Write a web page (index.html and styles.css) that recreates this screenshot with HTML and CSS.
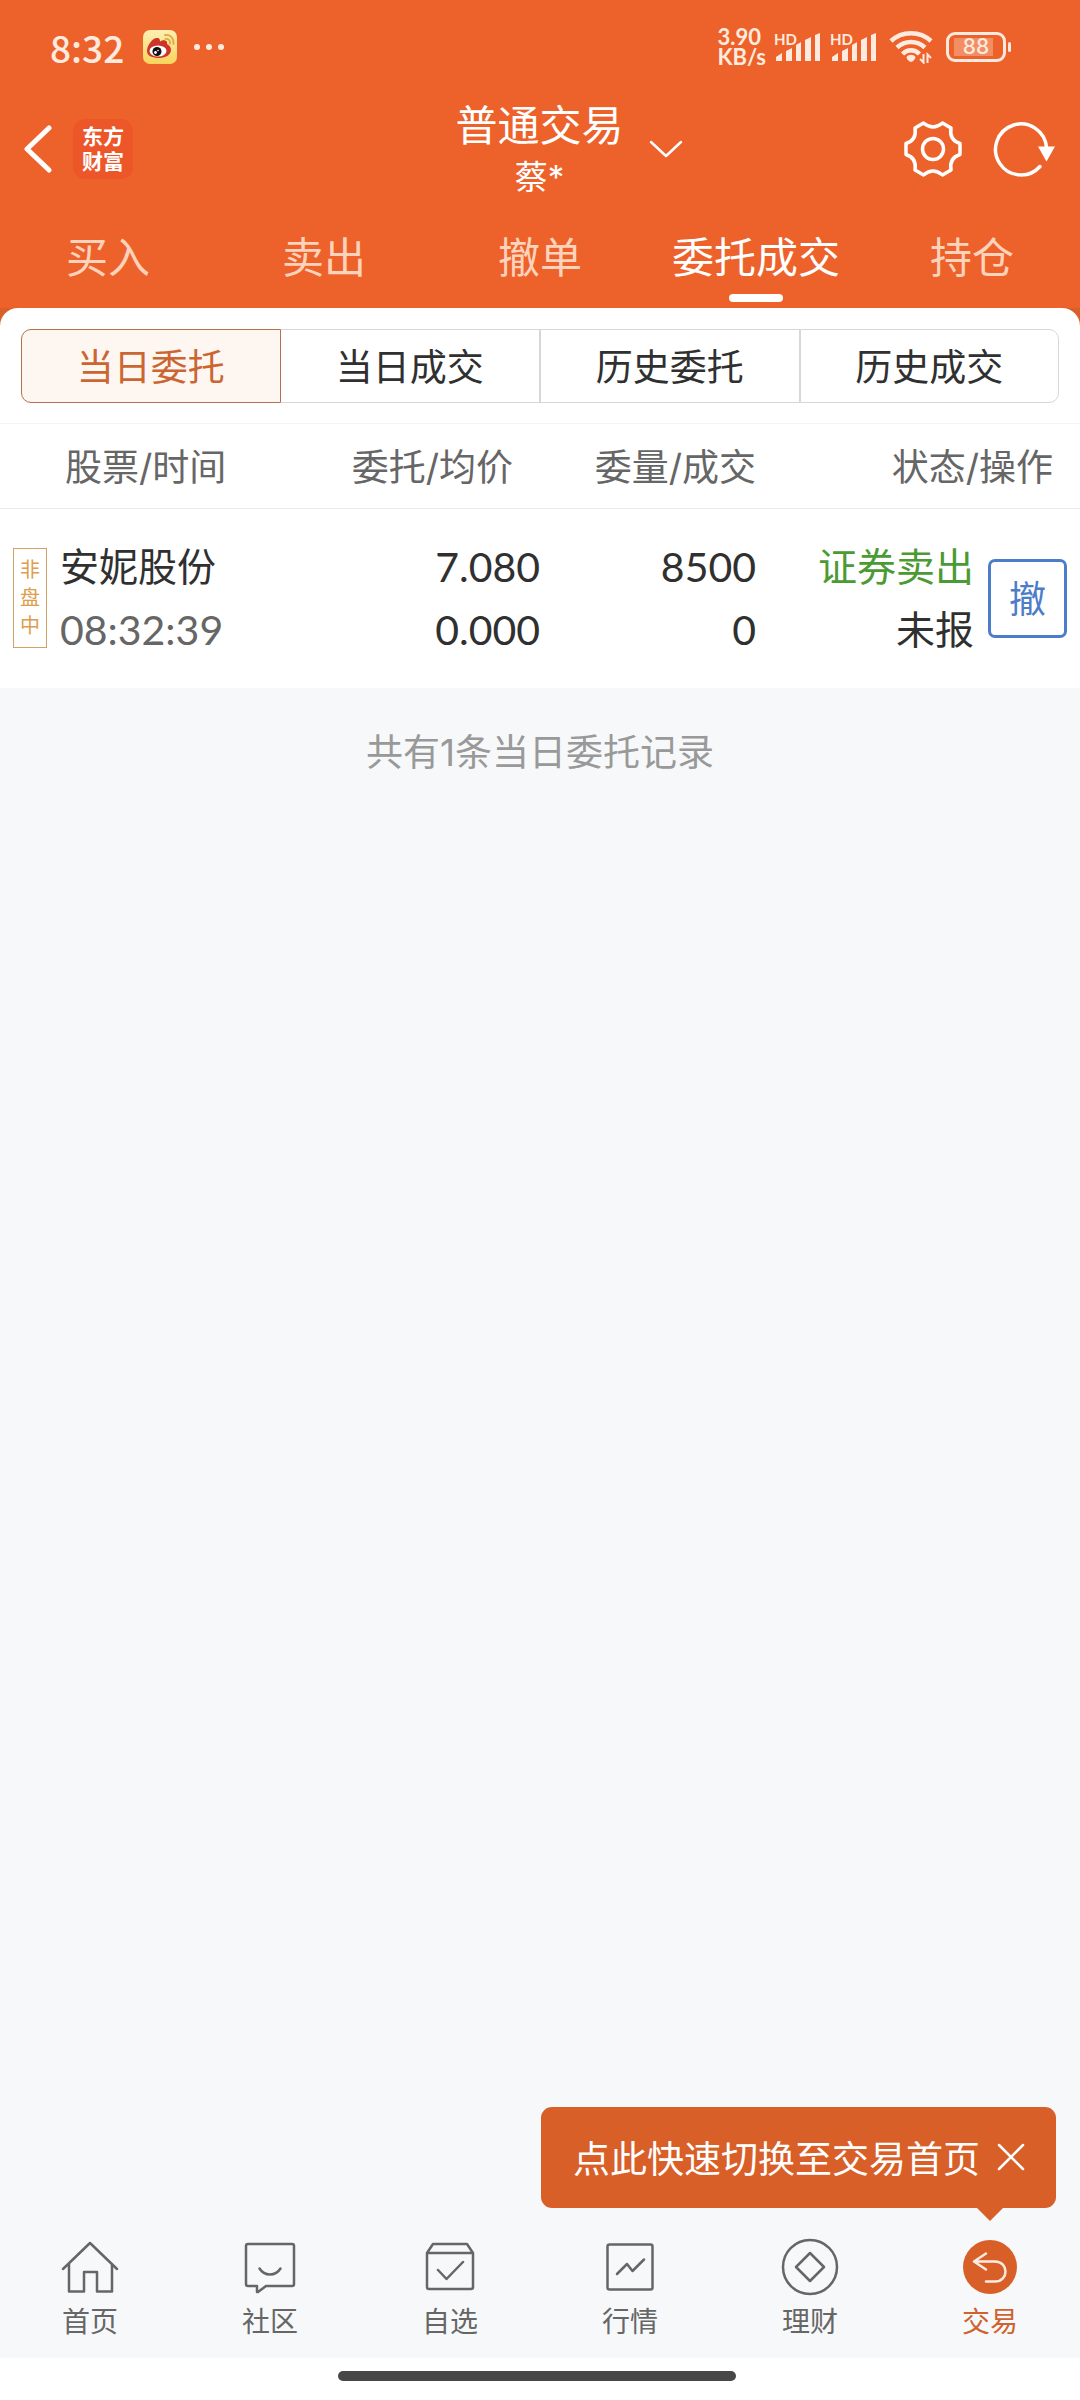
FILE: index.html
```html
<!DOCTYPE html>
<html lang="zh-CN">
<head>
<meta charset="utf-8">
<meta name="viewport" content="width=device-width, initial-scale=1">
<title>普通交易</title>
<link rel="stylesheet" href="styles.css">
</head>
<body>
<div class="app">
  <header class="top">
    <div class="status">
      <div class="status-left">
        <span class="clock">8:32</span>
        <svg class="weibo" width="34" height="34" viewBox="0 0 34 34" aria-hidden="true">
          <defs><linearGradient id="wb" x1="0" y1="0" x2="0" y2="1"><stop offset="0" stop-color="#fdf0b4"/><stop offset="1" stop-color="#f9d35c"/></linearGradient></defs>
          <rect width="34" height="34" rx="7" fill="url(#wb)"/>
          <path d="M4 21C4 16 9 8 14 8c3 0 3 2 3 3.500 3-2 8-2 7 2.500 2 1 4 3 4 6 0 5-6 8-12 8S4 26 4 21z" fill="#cf3329"/>
          <ellipse cx="15" cy="21" rx="8.500" ry="5.500" fill="#fff"/>
          <circle cx="14" cy="21.500" r="4.500" fill="#111"/>
          <circle cx="12.500" cy="22.500" r="1.400" fill="#fff"/><circle cx="15" cy="20.500" r=".8" fill="#fff"/>
          <path d="M22 5c5-1 9 3 8.500 9M22.500 9c3-.5 5 1.500 4.500 4.500" fill="none" stroke="#e3a944" stroke-width="1.800" stroke-linecap="round"/>
        </svg>
        <svg width="30" height="6" viewBox="0 0 30 6" fill="#ffeadf" aria-hidden="true"><circle cx="3" cy="3" r="3"/><circle cx="15" cy="3" r="3"/><circle cx="27" cy="3" r="3"/></svg>
      </div>
      <div class="status-right">
        <div class="speed"><span>3.90</span><span>KB/s</span></div>
        <div class="signal">
          <span>HD</span>
          <svg width="44" height="28" viewBox="0 0 44 28" fill="#ffeadf" aria-hidden="true"><path d="M0 28v-4l6-4v8zM10 28V18l6-3v13zM20 28V12l5-3v19zM29 28V7l6-3v24zM39 28V2l5-2v28z"/></svg>
        </div>
        <div class="signal">
          <span>HD</span>
          <svg width="44" height="28" viewBox="0 0 44 28" fill="#ffeadf" aria-hidden="true"><path d="M0 28v-4l6-4v8zM10 28V18l6-3v13zM20 28V12l5-3v19zM29 28V7l6-3v24zM39 28V2l5-2v28z"/></svg>
        </div>
        <svg class="wifi" width="44" height="34" viewBox="0 0 44 34" fill="none" stroke="#ffeadf" stroke-width="4.500" aria-hidden="true">
          <path d="M2 11c11-10.500 29-10.500 40 0M8 17.500c8-7.500 20-7.500 28 0M13.500 24c5-5 12-5 17 0"/>
          <path d="M17.500 27c2-3 7-3 9 0 0 2-3 5-4.500 5s-4.500-3-4.500-5z" fill="#ffeadf" stroke="none"/>
          <path d="M34.500 24v8.500L31 29M38.500 33v-8.500L42 28" stroke-width="2"/>
        </svg>
        <div class="battery"><span>88</span></div>
      </div>
    </div>

    <div class="titlebar">
      <div class="title-left">
        <button class="icon-btn" aria-label="返回">
          <svg width="30" height="52" viewBox="0 0 30 52" fill="none" stroke="#fff" stroke-width="5" stroke-linecap="round" stroke-linejoin="round"><path d="M25 5L3 26l22 21"/></svg>
        </button>
        <div class="logo"><span>东方</span><span>财富</span></div>
      </div>
      <div class="title">
        <h1>普通交易</h1>
        <p>蔡*</p>
      </div>
      <div class="title-right">
        <button class="icon-btn" aria-label="切换账户">
          <svg width="34" height="18" viewBox="0 0 34 18" fill="none" stroke="#fff" stroke-width="2.500" stroke-linecap="round" stroke-linejoin="round"><path d="M2 2l15 14L32 2"/></svg>
        </button>
        <div class="actions">
          <button class="icon-btn" aria-label="设置">
            <svg width="60" height="60" viewBox="0 0 60 60" fill="none" stroke="#fff" stroke-width="3.500" stroke-linejoin="round"><path d="M20.500 4Q30 12 39.500 4L48 9Q46 21 57 24.500V35.500Q46 39 48 51L39.500 56Q30 48 20.500 56L12 51Q14 39 3 35.500V24.500Q14 21 12 9Z"/><circle cx="30" cy="30" r="10.500"/></svg>
          </button>
          <button class="icon-btn" aria-label="刷新">
            <svg width="64" height="60" viewBox="0 0 64 60" fill="none" stroke="#fff" stroke-width="3.500" stroke-linecap="round"><path d="M55.500 29A25.500 25.500 0 1 0 49 47.500"/><path d="M47 27.500h17l-8.500 15z" fill="#fff" stroke="none"/></svg>
          </button>
        </div>
      </div>
    </div>

    <nav class="tabs">
      <a href="#buy">买入</a>
      <a href="#sell">卖出</a>
      <a href="#cancel">撤单</a>
      <a href="#orders" class="on" aria-current="page">委托成交</a>
      <a href="#positions">持仓</a>
    </nav>
  </header>

  <main class="main">
    <div class="card-back">
      <section class="card">
        <div class="segments">
          <button class="on">当日委托</button>
          <button>当日成交</button>
          <button>历史委托</button>
          <button>历史成交</button>
        </div>
        <table class="orders">
          <colgroup><col class="c-stock"><col class="c-price"><col class="c-qty"><col class="c-state"></colgroup>
          <thead>
            <tr><th class="h-stock">股票/时间</th><th class="h-price">委托/均价</th><th>委量/成交</th><th class="h-state">状态/操作</th></tr>
          </thead>
          <tbody>
            <tr>
              <td>
                <div class="stock">
                  <span class="badge"><span>非</span><span>盘</span><span>中</span></span>
                  <div class="pair"><span>安妮股份</span><span class="num muted">08:32:39</span></div>
                </div>
              </td>
              <td><div class="pair num"><span>7.080</span><span>0.000</span></div></td>
              <td><div class="pair num"><span>8500</span><span>0</span></div></td>
              <td>
                <div class="state">
                  <div class="pair"><span class="sell">证券卖出</span><span>未报</span></div>
                  <button class="revoke">撤</button>
                </div>
              </td>
            </tr>
          </tbody>
        </table>
      </section>
    </div>
    <p class="summary">共有1条当日委托记录</p>
  </main>

  <footer class="bottom">
    <div class="tip" role="status">
      <span>点此快速切换至交易首页</span>
      <button class="icon-btn" aria-label="关闭">
        <svg width="28" height="28" viewBox="0 0 28 28" fill="none" stroke="#fff" stroke-width="2.500" stroke-linecap="round"><path d="M2 2l24 24M26 2L2 26"/></svg>
      </button>
    </div>
    <nav class="nav">
      <a href="#home"><svg viewBox="0 0 60 60"><path d="M3 32L30 6l27 26M9 27v27.500h15V35h13v19.500h15V27"/></svg>首页</a>
      <a href="#community"><svg viewBox="0 0 60 60"><path d="M8 7h44a2 2 0 0 1 2 2v38a2 2 0 0 1-2 2H26l-8 6h-1v-6H8a2 2 0 0 1-2-2V9a2 2 0 0 1 2-2zM19.500 31.500c5 8 16 8 21 0"/></svg>社区</a>
      <a href="#watchlist"><svg viewBox="0 0 60 60"><path d="M7 16l6-9h34l6 9v34a2 2 0 0 1-2 2H9a2 2 0 0 1-2-2zM7 16h46M18 33l8.500 9L43 25"/></svg>自选</a>
      <a href="#market"><svg viewBox="0 0 60 60"><rect x="7.500" y="7.500" width="45" height="45" rx="2"/><path d="M17 37l10-10 5.500 7L44 22.500"/></svg>行情</a>
      <a href="#wealth"><svg viewBox="0 0 60 60"><circle cx="30" cy="30" r="27"/><path d="M30 16l14 14-14 14-14-14z"/></svg>理财</a>
      <a href="#trade" class="on" aria-current="page"><svg viewBox="0 0 60 60"><circle cx="30" cy="30" r="27" fill="#d85f28" stroke="none"/><path d="M26 16.500L14 24.500l12 8M14 24.500h21c14 0 14 20 0 20h-9" stroke="#ffeadf"/></svg>交易</a>
    </nav>
    <div class="gesture"><span></span></div>
  </footer>
</div>
</body>
</html>
```
FILE: styles.css
```css
* { box-sizing: border-box; }

body {
  margin: 0;
  background: #f7f8fa;
  color: #303030;
  font-family: Inter, "Noto Sans CJK SC", sans-serif;
  font-size: 37px;
}

h1, p { margin: 0; font-weight: 400; }
a { color: inherit; text-decoration: none; }
button {
  margin: 0;
  padding: 0;
  border: 0;
  background: none;
  color: inherit;
  font: inherit;
}
svg { display: block; flex: none; }
.icon-btn { display: flex; }

.app {
  display: flex;
  flex-direction: column;
  min-height: 100vh;
}

/* status bar */
.top { background: #ed622b; color: #fff; }
.status {
  display: flex;
  justify-content: space-between;
  align-items: center;
  height: 92px;
  padding: 2px 74px 0 50px;
  color: #ffeadf;
}
.status-left, .status-right { display: flex; align-items: center; }
.clock {
  margin-right: 19px;
  font: 500 37px/44px "Noto Sans CJK SC", sans-serif;
}
.weibo { margin-right: 17px; }
.status-right { gap: 8px; }
.speed {
  display: flex;
  flex-direction: column;
  font: 700 22px/20px Lato, sans-serif;
}
.signal {
  position: relative;
  padding-left: 2px;
}
.signal span {
  position: absolute;
  top: -2px;
  left: 0;
  font: 700 15px/16px Lato, sans-serif;
}
.signal + .signal { margin-left: 2px; }
.wifi { margin: 0 5px; }
.battery {
  position: relative;
  width: 60px;
  height: 30px;
  padding: 3px 5px;
  border: 3px solid #ffeadf;
  border-radius: 9px;
  font-size: 21px;
  font-weight: 500;
  line-height: 18px;
  text-align: center;
}
.battery span {
  display: block;
  background: linear-gradient(90deg, #f38d63 88%, transparent 88%);
}
.battery::after {
  content: "";
  position: absolute;
  top: 7px;
  right: -8px;
  width: 3px;
  height: 10px;
  border-radius: 2px;
  background: #ffeadf;
}

/* title bar */
.titlebar {
  display: grid;
  grid-template-columns: 1fr auto 1fr;
  align-items: center;
  height: 114px;
  padding: 0 25px 0 24px;
}
.title-left { display: flex; align-items: center; gap: 19px; }
.logo {
  display: flex;
  flex-direction: column;
  justify-content: center;
  width: 60px;
  height: 60px;
  border-radius: 12px;
  background: #ec5629;
  font-size: 21px;
  font-weight: 700;
  line-height: 25px;
  text-align: center;
}
.title { text-align: center; }
.title h1 { font-size: 42px; line-height: 56px; }
.title p { font-size: 33px; line-height: 46px; }
.title-right {
  display: flex;
  justify-content: space-between;
  align-items: center;
  padding-left: 25px;
}
.actions { display: flex; gap: 28px; }

/* main tabs */
.tabs {
  display: grid;
  grid-template-columns: repeat(5, 1fr);
  height: 102px;
  font-size: 42px;
  line-height: 104px;
  text-align: center;
  color: #ffd3bb;
}
.tabs a { position: relative; }
.tabs .on { color: #fff; }
.tabs .on::after {
  content: "";
  position: absolute;
  bottom: 8px;
  left: 50%;
  width: 54px;
  height: 8px;
  margin-left: -27px;
  border-radius: 4px;
  background: #fff;
}

/* order card */
.main { flex: 1; }
.card-back { background: linear-gradient(#d85f28 30px, transparent 30px); }
.card {
  padding-top: 21px;
  border-radius: 18px 18px 0 0;
  background: #fff;
}
.segments {
  display: grid;
  grid-template-columns: repeat(4, 1fr);
  margin: 0 21px 20px;
}
.segments button {
  height: 74px;
  padding-bottom: 2px;
  border: 1px solid #d6d7d9;
}
.segments button:first-child { border-radius: 10px 0 0 10px; }
.segments button:last-child { border-radius: 0 10px 10px 0; }
.segments .on {
  border-color: #b5714c;
  background: #fdf6f1;
  color: #cb6532;
}
.segments .on + button { border-left: 0; }

.orders {
  width: 100%;
  table-layout: fixed;
  border-collapse: collapse;
  border-top: 1px solid #f4f4f4;
}
.c-stock { width: 28%; }
.c-price { width: 22%; }
.c-qty { width: 20%; }
.c-state { width: 30%; }
.orders th {
  height: 85px;
  padding: 0 0 2px;
  border-bottom: 1px solid #ebebeb;
  color: #666;
  font-weight: 400;
  text-align: right;
}
.orders .h-stock { padding-left: 65px; text-align: left; }
.orders .h-price { padding-right: 27px; }
.orders .h-state { padding-right: 27px; }
.orders td { height: 179px; padding: 0; text-align: right; }
.pair {
  display: flex;
  flex-direction: column;
  font-size: 39px;
  line-height: 63px;
}
.num { font-family: Lato, "Noto Sans CJK SC", sans-serif; font-size: 41px; }
.muted { color: #666; }
.sell { color: #4b9a33; }
.stock {
  display: flex;
  align-items: center;
  gap: 13px;
  padding-left: 13px;
  text-align: left;
}
.badge {
  display: flex;
  flex-direction: column;
  justify-content: center;
  width: 34px;
  height: 100px;
  border: 1px solid #d0a263;
  color: #dd9d4c;
  font-size: 20px;
  line-height: 28px;
  text-align: center;
}
.state {
  display: flex;
  justify-content: flex-end;
  align-items: center;
  gap: 14px;
  padding-right: 13px;
}
.revoke {
  width: 79px;
  height: 79px;
  padding-bottom: 2px;
  border: 3px solid #4b7dc8;
  border-radius: 7px;
  color: #4b7dc8;
}
.summary {
  padding: 40px 0;
  color: #999;
  line-height: 50px;
  text-align: center;
}

/* bottom area */
.tip {
  position: relative;
  display: flex;
  align-items: center;
  gap: 17px;
  width: max-content;
  height: 101px;
  margin: 0 24px 29px auto;
  padding: 0 31px 2px 32px;
  border-radius: 11px;
  background: #d85f28;
  color: #fff;
}
.tip::after {
  content: "";
  position: absolute;
  top: 100%;
  right: 53px;
  border: 13px solid transparent;
  border-top-color: #d85f28;
  border-bottom: 0;
}
.nav {
  display: grid;
  grid-template-columns: repeat(6, 1fr);
  height: 121px;
  color: #666;
  font-size: 28px;
  line-height: 50px;
}
.nav a { display: flex; flex-direction: column; align-items: center; }
.nav svg {
  width: 60px;
  height: 60px;
  fill: none;
  stroke: #666;
  stroke-width: 2.5;
  stroke-linecap: round;
  stroke-linejoin: round;
}
.nav .on { color: #d0622f; }
.gesture { height: 42px; padding: 13px 6px 0 0; background: #fff; }
.gesture span {
  display: block;
  width: 37%;
  height: 10px;
  margin: 0 auto;
  border-radius: 5px;
  background: #474747;
}
```
